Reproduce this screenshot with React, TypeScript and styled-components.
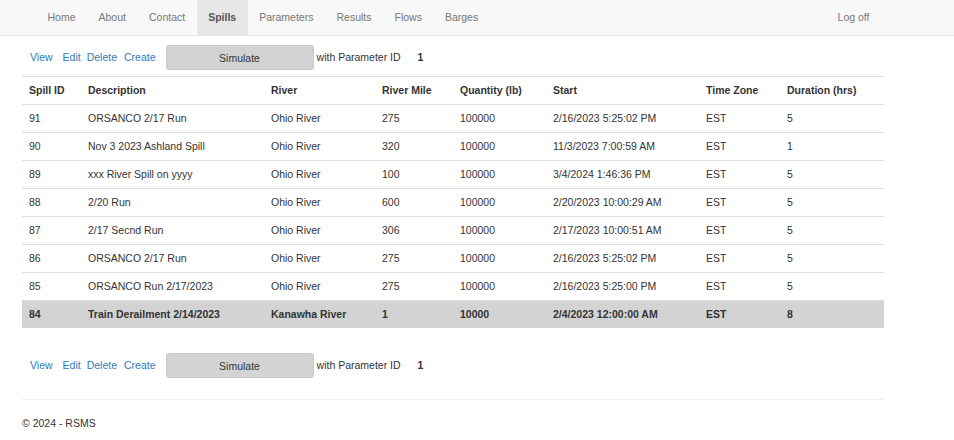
import React from "react";
import styled, { createGlobalStyle } from "styled-components";

const GlobalStyle = createGlobalStyle`
  html, body { margin: 0; padding: 0; background: #fff; }
  body {
    font-family: "Liberation Sans", Arial, Helvetica, sans-serif;
    font-size: 10.5px;
    line-height: 15px;
    color: #333;
  }
`;

const NavBar = styled.nav`
  height: 35px;
  background: #f8f8f8;
  border-bottom: 1px solid #e7e7e7;
  display: flex;
  justify-content: space-between;
  padding: 0 73px 0 36px;
`;

const NavList = styled.ul`
  display: flex;
  list-style: none;
  margin: 0;
  padding: 0;
`;

const NavItem = styled.li<{ $active?: boolean }>`
  display: flex;
  align-items: center;
  padding: 0 11.5px;
  height: 35px;
  color: ${(p) => (p.$active ? "#555" : "#777")};
  background: ${(p) => (p.$active ? "#e7e7e7" : "transparent")};
  font-weight: ${(p) => (p.$active ? "bold" : "normal")};
  font-size: 10.5px;
`;

const Main = styled.main`
  width: 862px;
  margin-left: 22px;
`;

const ActionRow = styled.div<{ $top: number; $bottom: number }>`
  display: flex;
  align-items: center;
  padding: ${(p) => p.$top}px 0 ${(p) => p.$bottom}px 8px;
  height: 25px;
  box-sizing: content-box;
`;

const ActionLink = styled.a<{ $gap: number }>`
  color: #337ab7;
  text-decoration: none;
  margin-left: ${(p) => p.$gap}px;
  cursor: pointer;
`;

const SimButton = styled.button`
  margin-left: 10px;
  width: 148px;
  height: 25px;
  background: #d3d3d3;
  border: 1px solid #c8c8c8;
  border-radius: 3px;
  font-family: inherit;
  font-size: 10.5px;
  color: #333;
  padding: 0;
`;

const ParamLabel = styled.span`
  margin-left: 3px;
`;

const ParamValue = styled.span`
  margin-left: 17px;
  font-weight: bold;
`;

const Table = styled.table`
  width: 862px;
  border-collapse: collapse;
  table-layout: fixed;
`;

const Th = styled.th`
  text-align: left;
  font-weight: bold;
  padding: 0 0 0 7px;
  height: 27px;
  border-top: 1px solid #ddd;
  border-bottom: 1px solid #ddd;
`;

const Tr = styled.tr<{ $selected?: boolean }>`
  background: ${(p) => (p.$selected ? "#d3d3d3" : "transparent")};
  font-weight: ${(p) => (p.$selected ? "bold" : "normal")};
`;

const Td = styled.td<{ $last?: boolean }>`
  padding: 0 0 0 7px;
  height: 27px;
  border-bottom: ${(p) => (p.$last ? "none" : "1px solid #ddd")};
  white-space: nowrap;
`;

const Hr = styled.hr`
  margin: 0;
  border: 0;
  border-top: 1px solid #eee;
`;

const Footer = styled.footer`
  padding-top: 16px;
  font-size: 10.5px;
`;

const navItems = ["Home", "About", "Contact", "Spills", "Parameters", "Results", "Flows", "Barges"];

const columns: [string, number][] = [
  ["Spill ID", 59],
  ["Description", 183],
  ["River", 111],
  ["River Mile", 78],
  ["Quantity (lb)", 93],
  ["Start", 153],
  ["Time Zone", 81],
  ["Duration (hrs)", 104],
];

const rows = [
  ["91", "ORSANCO 2/17 Run", "Ohio River", "275", "100000", "2/16/2023 5:25:02 PM", "EST", "5"],
  ["90", "Nov 3 2023 Ashland Spill", "Ohio River", "320", "100000", "11/3/2023 7:00:59 AM", "EST", "1"],
  ["89", "xxx River Spill on yyyy", "Ohio River", "100", "100000", "3/4/2024 1:46:36 PM", "EST", "5"],
  ["88", "2/20 Run", "Ohio River", "600", "100000", "2/20/2023 10:00:29 AM", "EST", "5"],
  ["87", "2/17 Secnd Run", "Ohio River", "306", "100000", "2/17/2023 10:00:51 AM", "EST", "5"],
  ["86", "ORSANCO 2/17 Run", "Ohio River", "275", "100000", "2/16/2023 5:25:02 PM", "EST", "5"],
  ["85", "ORSANCO Run 2/17/2023", "Ohio River", "275", "100000", "2/16/2023 5:25:00 PM", "EST", "5"],
  ["84", "Train Derailment 2/14/2023", "Kanawha River", "1", "10000", "2/4/2023 12:00:00 AM", "EST", "8"],
];

function Actions({ top, bottom }: { top: number; bottom: number }) {
  return (
    <ActionRow $top={top} $bottom={bottom}>
      <ActionLink $gap={0}>View</ActionLink>
      <ActionLink $gap={10}>Edit</ActionLink>
      <ActionLink $gap={6}>Delete</ActionLink>
      <ActionLink $gap={7}>Create</ActionLink>
      <SimButton>Simulate</SimButton>
      <ParamLabel>with Parameter ID</ParamLabel>
      <ParamValue>1</ParamValue>
    </ActionRow>
  );
}

export default function App() {
  return (
    <>
      <GlobalStyle />
      <NavBar>
        <NavList>
          {navItems.map((n) => (
            <NavItem key={n} $active={n === "Spills"}>
              {n}
            </NavItem>
          ))}
        </NavList>
        <NavList>
          <NavItem>Log off</NavItem>
        </NavList>
      </NavBar>
      <Main>
        <Actions top={9} bottom={6} />
        <Table>
          <colgroup>
            {columns.map(([c, w]) => (
              <col key={c} style={{ width: w }} />
            ))}
          </colgroup>
          <thead>
            <tr>
              {columns.map(([c]) => (
                <Th key={c}>{c}</Th>
              ))}
            </tr>
          </thead>
          <tbody>
            {rows.map((r, i) => {
              const last = i === rows.length - 1;
              return (
                <Tr key={r[0]} $selected={last}>
                  {r.map((v, j) => (
                    <Td key={j} $last={last}>
                      {v}
                    </Td>
                  ))}
                </Tr>
              );
            })}
          </tbody>
        </Table>
        <Actions top={25} bottom={21} />
        <Hr />
        <Footer>© 2024 - RSMS</Footer>
      </Main>
    </>
  );
}
